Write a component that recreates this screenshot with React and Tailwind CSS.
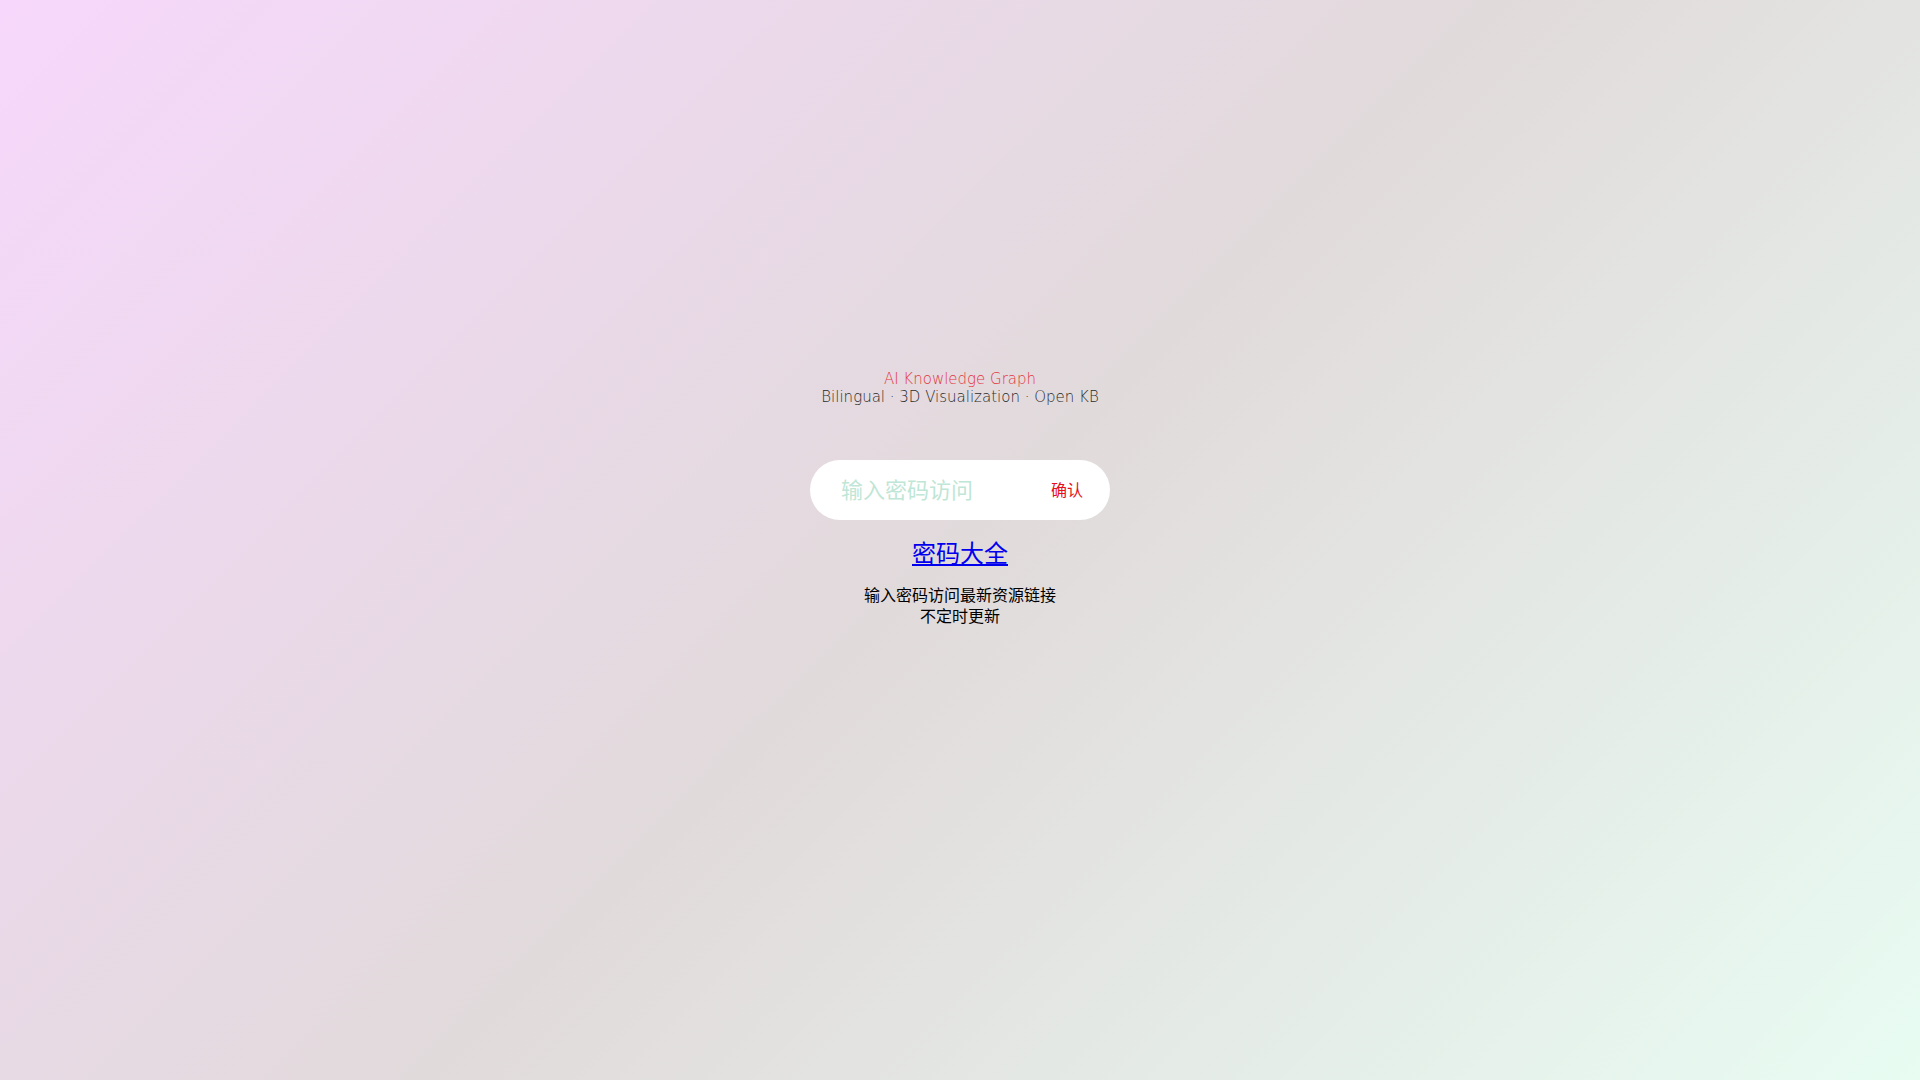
import { useState } from 'react';

/**
 * Password gate page for the AI knowledge graph
 */
export default function App() {
  const [password, setPassword] = useState('');

  const handleSubmit = (e) => {
    e.preventDefault();
  };

  return (
    <div
      className="min-h-screen w-full bg-[linear-gradient(135deg,#f7d8fc_0%,#e1dadb_50%,#e8fcf2_100%)] flex flex-col items-center pt-[370px]"
      style={{ fontFamily: '"DejaVu Sans", "Noto Sans CJK SC", sans-serif' }}
    >
      {/* Header */}
      <div className="flex flex-col items-center text-[15px] leading-[18px] font-extralight">
        <h1 className="text-[#e3363e]">AI Knowledge Graph</h1>
        <p className="text-[#2a2a2a]">Bilingual · 3D Visualization · Open KB</p>
      </div>

      {/* Password field */}
      <form
        onSubmit={handleSubmit}
        className="mt-[54px] w-[300px] h-[60px] rounded-full bg-white flex items-center pl-[31px] pr-[27px]"
      >
        <input
          type="password"
          value={password}
          onChange={(e) => setPassword(e.target.value)}
          placeholder="输入密码访问"
          className="flex-1 min-w-0 bg-transparent outline-none text-[22px] text-[#333] placeholder:text-[#bfe6d6]"
        />
        <button type="submit" className="text-[16px] text-[#e8101a] pt-[2px]">
          确认
        </button>
      </form>

      {/* Link + note */}
      <a href="#" className="mt-[20px] text-[24px] leading-[28px] text-[#0000ee] underline">
        密码大全
      </a>
      <div className="mt-[17px] flex flex-col items-center text-[16px] leading-[21px] text-black">
        <p>输入密码访问最新资源链接</p>
        <p>不定时更新</p>
      </div>
    </div>
  );
}
